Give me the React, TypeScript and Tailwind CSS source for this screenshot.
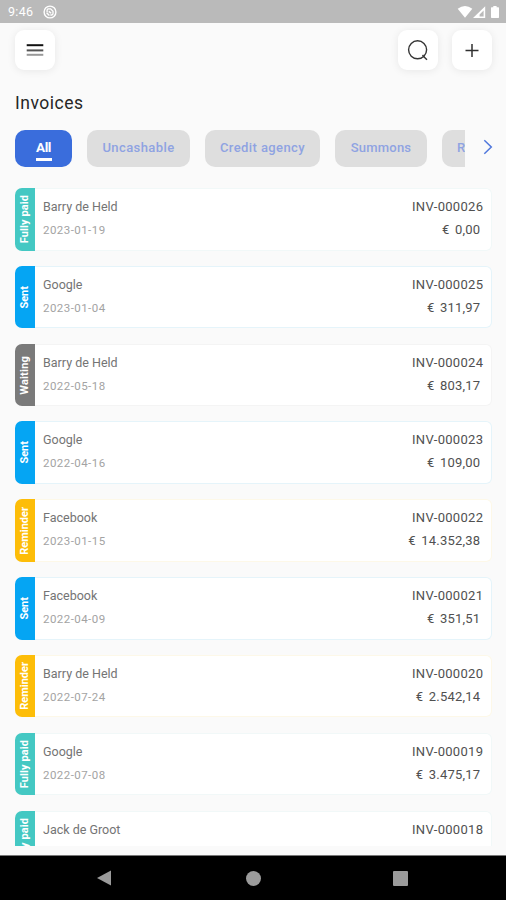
import React from "react";

type Status = "paid" | "sent" | "waiting" | "reminder";

const STATUS: Record<Status, { label: string; tab: string; edge: string; text: string }> = {
  paid: { label: "Fully paid", tab: "bg-[#44c8c3]", edge: "border-[#f1f8f8]", text: "tracking-[0.1px]" },
  sent: { label: "Sent", tab: "bg-[#05a5f3]", edge: "border-[#e5f4fa]", text: "tracking-[0px]" },
  waiting: { label: "Waiting", tab: "bg-[#7a7a7a]", edge: "border-[#f4f4f4]", text: "tracking-[0.2px]" },
  reminder: { label: "Reminder", tab: "bg-[#fdbd08]", edge: "border-[#fdf8e8]", text: "tracking-[0px]" },
};

type Invoice = { status: Status; name: string; date?: string; no: string; amount?: string };

const INVOICES: Invoice[] = [
  { status: "paid", name: "Barry de Held", date: "2023-01-19", no: "INV-000026", amount: "€ 0,00" },
  { status: "sent", name: "Google", date: "2023-01-04", no: "INV-000025", amount: "€ 311,97" },
  { status: "waiting", name: "Barry de Held", date: "2022-05-18", no: "INV-000024", amount: "€ 803,17" },
  { status: "sent", name: "Google", date: "2022-04-16", no: "INV-000023", amount: "€ 109,00" },
  { status: "reminder", name: "Facebook", date: "2023-01-15", no: "INV-000022", amount: "€ 14.352,38" },
  { status: "sent", name: "Facebook", date: "2022-04-09", no: "INV-000021", amount: "€ 351,51" },
  { status: "reminder", name: "Barry de Held", date: "2022-07-24", no: "INV-000020", amount: "€ 2.542,14" },
  { status: "paid", name: "Google", date: "2022-07-08", no: "INV-000019", amount: "€ 3.475,17" },
  { status: "paid", name: "Jack de Groot", no: "INV-000018" },
];

function StatusBar() {
  return (
    <header className="flex h-[23px] shrink-0 items-center bg-[#bababa] pt-px pr-[5px] pl-[8px] text-white">
      <span className="text-[12.5px] leading-none tracking-[0.3px]">9:46</span>
      <svg className="ml-[10px]" width="14" height="14" viewBox="0 0 14 14" fill="none" stroke="white">
        <circle cx="7" cy="7" r="5.9" strokeWidth="1.4" />
        <path d="M4.1 7.2 V5.2 Q4.1 3.9 5.4 3.9 H7.6 L10 6.3 V8.6 Q10 10 8.6 10 H7.4" strokeWidth="1.3" />
        <path d="M3.6 7.8 L6.4 10.4 M5.8 6.4 L8.2 8.2" strokeWidth="1.4" />
      </svg>
      <svg className="ml-auto" width="44" height="14" viewBox="0 0 44 14" fill="white">
        <path d="M0.7 3.8 Q8 -1.6 15.3 3.8 L8 12.8 Z" />
        <path d="M28.2 1.2 V13 H16 Z M26.6 5.4 L22.6 9.4 V11.6 H26.6 Z" fillRule="evenodd" />
        <path d="M34.5 2.2 H36.3 V1 H39.6 V2.2 H41.4 Q42 2.2 42 3 V12.2 Q42 13 41.4 13 H34.6 Q34 13 34 12.2 V3 Q34 2.2 34.5 2.2 Z" />
      </svg>
    </header>
  );
}

function IconButton({ label, children }: { label: string; children: React.ReactNode }) {
  return (
    <button
      aria-label={label}
      className="flex size-[40px] items-center justify-center rounded-[9px] bg-white shadow-[0_1px_8px_rgba(0,0,0,0.08)]"
    >
      {children}
    </button>
  );
}

function Toolbar() {
  return (
    <div className="flex shrink-0 gap-[14px] pt-[7px] pr-[14px] pl-[15px]">
      <IconButton label="Menu">
        <svg width="18" height="14" viewBox="0 0 18 14" strokeWidth="2">
          <path d="M0.7 2.2 H17.3" stroke="#111111" />
          <path d="M0.7 7.4 H17.3" stroke="#555555" />
          <path d="M0.7 11.8 H17.3" stroke="#999999" />
        </svg>
      </IconButton>
      <span className="flex-1" />
      <IconButton label="Search">
        <svg width="22" height="22" viewBox="0 0 22 22" fill="none" stroke="#353535" strokeWidth="1.4">
          <circle cx="10.6" cy="10.8" r="9" />
          <path d="M15.6 15.8 L16.6 17.6 L20 20.8" />
        </svg>
      </IconButton>
      <IconButton label="Add">
        <svg width="14" height="14" viewBox="0 0 14 14" stroke="#303030" strokeWidth="1.5">
          <path d="M0.5 7.5 H13.5 M7 1 V14" />
        </svg>
      </IconButton>
    </div>
  );
}

function Chip({ className, children }: { className: string; children: React.ReactNode }) {
  return (
    <button
      className={`h-[37px] shrink-0 rounded-[10px] bg-[#dedede] pb-[2px] text-[13px] font-medium whitespace-nowrap text-[#8fa3e2] ${className}`}
    >
      {children}
    </button>
  );
}

function Filters() {
  return (
    <nav className="mt-[16px] flex h-[38px] shrink-0 items-start pl-[15px]">
      <div className="flex w-[450px] gap-[15px] overflow-hidden">
        <button className="flex h-[37px] w-[57px] shrink-0 flex-col items-center rounded-[10px] bg-[#3a6ddc] pt-[9px] text-white">
          <span className="text-[13.5px] leading-[17px] font-bold tracking-[-0.4px]">All</span>
          <span className="mt-[2px] h-[3px] w-[16px] bg-white" />
        </button>
        <Chip className="w-[103px] tracking-[0.4px]">Uncashable</Chip>
        <Chip className="w-[115px] tracking-[0.4px]">Credit agency</Chip>
        <Chip className="w-[92px] tracking-[0.2px]">Summons</Chip>
        <Chip className="w-[23px] rounded-r-none pl-[15px] text-left">R</Chip>
      </div>
      <svg className="mt-[9px] ml-[18px]" width="10" height="16" viewBox="0 0 10 16" fill="none" stroke="#4f77dc" strokeWidth="1.5">
        <path d="M1.3 1.2 L8.3 8 L1.3 14.8" />
      </svg>
    </nav>
  );
}

function InvoiceCard({ invoice }: { invoice: Invoice }) {
  const status = STATUS[invoice.status];
  return (
    <li className="flex h-[62.5px] shrink-0">
      <div className={`flex w-[20px] shrink-0 items-center justify-center rounded-l-[7px] ${status.tab}`}>
        <span className={`rotate-180 text-[11px] leading-[20px] font-bold whitespace-nowrap text-white [writing-mode:vertical-rl] ${status.text}`}>
          {status.label}
        </span>
      </div>
      <div className={`flex flex-1 justify-between rounded-r-[6px] border border-l-0 bg-white pt-[9px] pl-[8px] ${status.edge}`}>
        <div>
          <p className="text-[12.5px] leading-[18px] text-[#747474]">{invoice.name}</p>
          {invoice.date && (
            <p className="mt-[6px] text-[11.5px] leading-[17px] tracking-[0.45px] text-[#a3a3a3]">{invoice.date}</p>
          )}
        </div>
        <div className="text-right text-[13px] text-[#505050]">
          <p className="pr-[7.7px] leading-[18px] tracking-[0.3px]">{invoice.no}</p>
          {invoice.amount && (
            <p className="mt-[5px] pr-[10.7px] leading-[18px] tracking-[0.22px] [word-spacing:2px]">{invoice.amount}</p>
          )}
        </div>
      </div>
    </li>
  );
}

function NavigationBar() {
  return (
    <footer className="flex h-[45px] shrink-0 items-center border-t border-[#777777] bg-black pl-[96px]">
      <svg width="16" height="16" viewBox="0 0 16 16" fill="#9b9b9b">
        <path d="M1 8 L15 0.5 V15.5 Z" />
      </svg>
      <span className="ml-[134px] size-[15px] rounded-full bg-[#9b9b9b]" />
      <span className="ml-[132px] size-[15px] rounded-[1px] bg-[#9b9b9b]" />
    </footer>
  );
}

export default function App() {
  return (
    <div className="flex h-[900px] w-[506px] flex-col overflow-hidden bg-[#fafafa] font-['Roboto','Noto_Sans',sans-serif]">
      <StatusBar />
      <Toolbar />
      <h1 className="mt-[22px] shrink-0 pl-[15px] text-[17.5px] leading-[22px] tracking-[0.5px] text-[#262626]">Invoices</h1>
      <Filters />
      <ul className="mt-[20px] flex h-[658px] shrink-0 flex-col gap-[15.33px] overflow-hidden pr-[14px] pl-[15px]">
        {INVOICES.map((invoice) => (
          <InvoiceCard key={invoice.no} invoice={invoice} />
        ))}
      </ul>
      <div className="flex-1" />
      <NavigationBar />
    </div>
  );
}
